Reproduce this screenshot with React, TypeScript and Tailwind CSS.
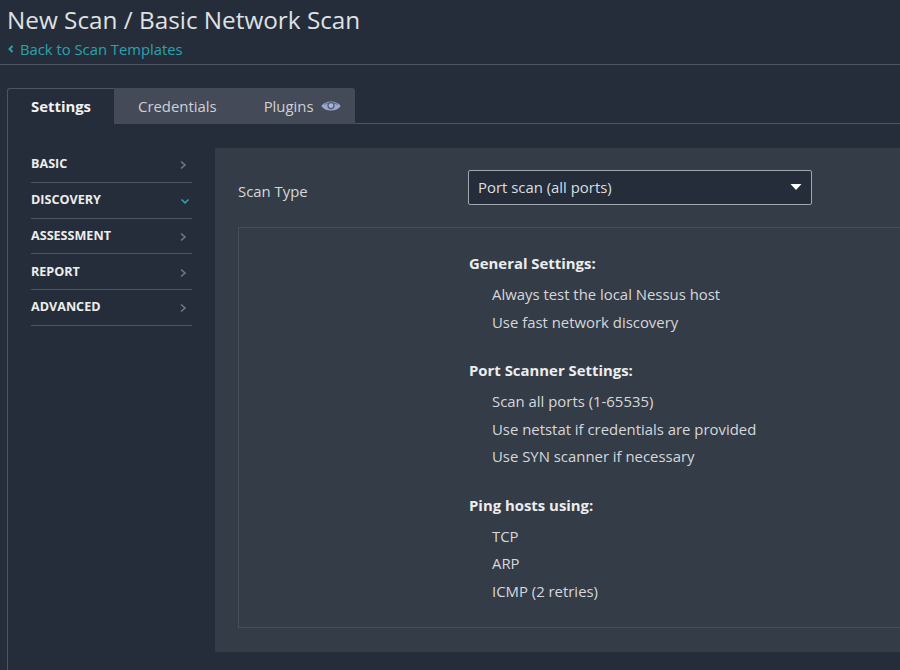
import React from "react";

const menu = [
  { label: "BASIC", open: false },
  { label: "DISCOVERY", open: true },
  { label: "ASSESSMENT", open: false },
  { label: "REPORT", open: false },
  { label: "ADVANCED", open: false },
];

const groups = [
  { title: "General Settings:", items: ["Always test the local Nessus host", "Use fast network discovery"], mb: "mb-[22px]" },
  { title: "Port Scanner Settings:", items: ["Scan all ports (1-65535)", "Use netstat if credentials are provided", "Use SYN scanner if necessary"], mb: "mb-[22px]" },
  { title: "Ping hosts using:", items: ["TCP", "ARP", "ICMP (2 retries)"], mb: "" },
];

function Chevron({ open }: { open: boolean }) {
  return open ? (
    <svg width="10" height="10" viewBox="0 0 10 10" fill="none" className="mt-[2px] mr-[2px]">
      <path d="M1.5 3.5 L5 6.8 L8.5 3.5" stroke="#2ba3ae" strokeWidth="1.6" />
    </svg>
  ) : (
    <svg width="10" height="10" viewBox="0 0 10 10" fill="none" className="mt-[2px] mr-[4px]">
      <path d="M3 1.5 L7 5 L3 8.5" stroke="#6f7886" strokeWidth="1.6" />
    </svg>
  );
}

export default function App() {
  return (
    <div className="w-[900px] h-[670px] overflow-hidden bg-[#252d3b] text-[#d6d8da] font-['Open_Sans',sans-serif] flex flex-col">
      <header className="h-[65px] border-b border-[#4d5460] pl-[7px] shrink-0">
        <h1 className="text-[24.3px] leading-[36px] pt-[2px] text-[#dfe1e3] font-normal">New Scan / Basic Network Scan</h1>
        <a className="flex items-center text-[14.8px] leading-[20px] mt-[1px] text-[#2aa3ae]">
          <svg width="6" height="8" viewBox="0 0 6 8" fill="none" className="mr-[6px] ml-[1px]">
            <path d="M4.5 1 L1.5 4 L4.5 7" stroke="#2aa3ae" strokeWidth="2" />
          </svg>
          Back to Scan Templates
        </a>
      </header>

      <div className="flex-1 pt-[23px] pl-[7px] min-h-0">
        <div className="flex h-[36px] border-b border-[#4d5460] text-[14.9px]">
          <div className="w-[107px] h-[36px] flex items-center justify-center bg-[#252d3b] border-l border-t border-[#4d5460] rounded-tl-[3px] font-bold text-[#f1f2f3]">
            Settings
          </div>
          <div className="w-[241px] h-[36px] flex items-center bg-[#444a57] rounded-tr-[3px] text-[#cfd1d4]">
            <span className="ml-[24px]">Credentials</span>
            <span className="ml-[47px]">Plugins</span>
            <svg width="20" height="14" viewBox="0 0 20 14" className="ml-[7px]">
              <path d="M0.3 7 C4 1, 16 1, 19.7 7 C16 13, 4 13, 0.3 7 Z" fill="#9aa8cf" />
              <path d="M3.5 5.5 C7 3.2, 13 3.2, 16.5 5.5" fill="none" stroke="#5b6580" strokeWidth="1" />
              <circle cx="10" cy="6.6" r="3" fill="#a9b6da" stroke="#525b73" strokeWidth="1.3" />
            </svg>
          </div>
        </div>

        <div className="flex border-l border-[#4d5460] h-[600px]">
          <nav className="w-[207px] shrink-0 pl-[23px] pt-[23px]">
            <ul className="w-[161px]">
              {menu.map((m) => (
                <li key={m.label} className="h-[35.75px] flex items-center justify-between border-b border-[#4d5460] text-[12.6px] font-bold text-[#eceded]">
                  <span className="pt-[1px]">{m.label}</span>
                  <Chevron open={m.open} />
                </li>
              ))}
            </ul>
          </nav>

          <section className="flex-1 mt-[24px] h-[504px] bg-[#343c48] pl-[23px] pt-[22px] min-w-0">
            <div className="flex items-center h-[34px]">
              <label className="w-[230px] text-[14.9px] text-[#d6d8da] pt-[8px]">Scan Type</label>
              <div className="w-[344px] h-[35px] flex items-center justify-between bg-[#252d3b] border border-[#a2a8b0] rounded-[2px] pl-[9px] pr-[9px] text-[14.9px] text-[#dcdee0]">
                <span>Port scan (all ports)</span>
                <svg width="12" height="6" viewBox="0 0 12 6"><path d="M0.5 0 H11.5 L6 6 Z" fill="#ffffff" /></svg>
              </div>
            </div>

            <div className="mt-[23px] h-[401px] -mr-[20px] border border-[#464e5a] pl-[230px] pt-[23px]">
              {groups.map((g) => (
                <div key={g.title} className={g.mb}>
                  <div className="text-[14.9px] leading-[24px] font-bold text-[#eceded] mb-[6px]">{g.title}</div>
                  {g.items.map((it) => (
                    <div key={it} className="pl-[23px] text-[14.9px] leading-[27.5px] text-[#d6d8da]">{it}</div>
                  ))}
                </div>
              ))}
            </div>
          </section>
        </div>
      </div>
    </div>
  );
}
